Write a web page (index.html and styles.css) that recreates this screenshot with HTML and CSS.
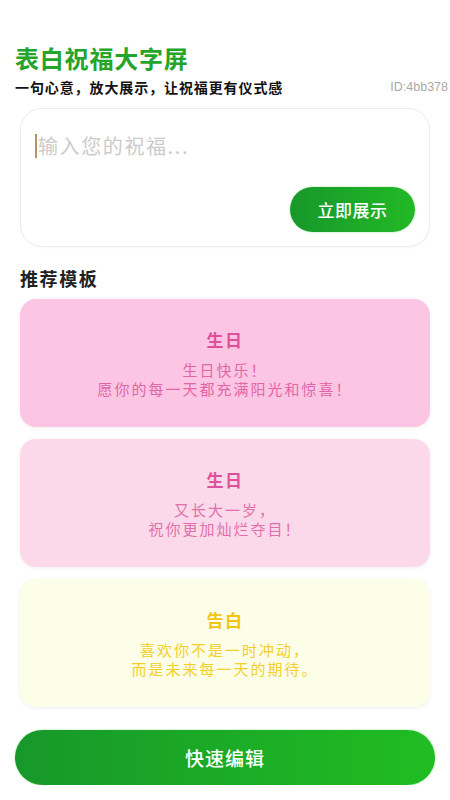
FILE: index.html
```html
<!DOCTYPE html>
<html lang="zh-CN">
<head>
<meta charset="utf-8">
<title>表白祝福大字屏</title>
<link rel="stylesheet" href="styles.css">
</head>
<body>
<div class="page">
  <header class="header">
    <h1 class="title">表白祝福大字屏</h1>
    <div class="sub-row">
      <span class="subtitle">一句心意，放大展示，让祝福更有仪式感</span>
      <span class="id">ID:4bb378</span>
    </div>
  </header>

  <section class="input-card">
    <div class="input-line">
      <span class="caret"></span>
      <span class="placeholder">输入您的祝福...</span>
    </div>
    <div class="input-actions">
      <button class="show-btn">立即展示</button>
    </div>
  </section>

  <h2 class="section-title">推荐模板</h2>

  <div class="templates">
    <div class="tpl tpl-pink">
      <div class="tpl-title">生日</div>
      <div class="tpl-text">生日快乐！<br>愿你的每一天都充满阳光和惊喜！</div>
    </div>
    <div class="tpl tpl-light">
      <div class="tpl-title">生日</div>
      <div class="tpl-text">又长大一岁，<br>祝你更加灿烂夺目！</div>
    </div>
    <div class="tpl tpl-yellow">
      <div class="tpl-title">告白</div>
      <div class="tpl-text">喜欢你不是一时冲动，<br>而是未来每一天的期待。</div>
    </div>
  </div>

  <button class="edit-btn">快速编辑</button>
</div>
</body>
</html>
```

FILE: styles.css
```css
* { box-sizing: border-box; }
html, body { margin: 0; padding: 0; background: #ffffff; }
body {
  font-family: "Noto Sans CJK SC", "Noto Sans", "Liberation Sans", sans-serif;
  color: #111;
}
.page {
  width: 450px;
  padding-top: 43px;
  display: flex;
  flex-direction: column;
}
.header { padding: 0 2px 0 15px; }
.title {
  margin: 0;
  font-size: 24px;
  line-height: 29px;
  font-weight: 700;
  letter-spacing: 0.8px;
  color: #25a42a;
}
.sub-row {
  margin-top: 5px;
  height: 20px;
  display: flex;
  align-items: center;
  justify-content: space-between;
}
.subtitle {
  font-size: 14px;
  line-height: 20px;
  font-weight: 700;
  letter-spacing: 0.9px;
  color: #111;
}
.id {
  font-family: "Liberation Sans", Arial, sans-serif;
  font-size: 12.5px;
  color: #a9a9a9;
}
.input-card {
  margin: 11px 20px 0 20px;
  height: 139px;
  border: 1px solid #ececec;
  border-radius: 22px;
  background: #fff;
  padding: 23px 14px 14px 14px;
  display: flex;
  flex-direction: column;
  justify-content: space-between;
  box-shadow: 0 1px 3px rgba(0,0,0,0.03);
}
.input-line {
  display: flex;
  align-items: center;
  height: 28px;
}
.caret {
  width: 2px;
  height: 24px;
  background: #b99463;
  margin-right: 1px;
}
.placeholder {
  font-size: 20px;
  line-height: 28px;
  letter-spacing: 1.6px;
  color: #cbcbcb;
}
.input-actions {
  display: flex;
  justify-content: flex-end;
}
.show-btn {
  width: 125px;
  height: 45px;
  border: none;
  border-radius: 23px;
  background: linear-gradient(90deg, #17982a, #22b926);
  color: #fff;
  font-family: inherit;
  font-size: 17px;
  font-weight: 500;
  letter-spacing: 0.5px;
  box-shadow: 0 0 2px rgba(60,200,60,0.5);
}
.section-title {
  margin: 19px 0 0 20px;
  font-size: 18px;
  line-height: 24px;
  font-weight: 700;
  letter-spacing: 1.6px;
  color: #222;
}
.templates {
  margin: 9px 20px 0 20px;
  display: flex;
  flex-direction: column;
  gap: 12px;
}
.tpl {
  height: 128px;
  border-radius: 16px;
  display: flex;
  flex-direction: column;
  align-items: center;
  justify-content: center;
  text-align: center;
  box-shadow: 0 1px 4px rgba(0,0,0,0.07);
}
.tpl-title {
  font-size: 17px;
  line-height: 24px;
  font-weight: 700;
  letter-spacing: 1.5px;
}
.tpl-text {
  margin-top: 8px;
  font-size: 15px;
  line-height: 19px;
  letter-spacing: 2px;
}
.tpl-pink { background: #fdc5e4; }
.tpl-pink .tpl-title { color: #e0509a; }
.tpl-pink .tpl-text { color: #e166a6; }
.tpl-light { background: #fbd9ea; }
.tpl-light .tpl-title { color: #e0509a; }
.tpl-light .tpl-text { color: #e170aa; }
.tpl-yellow { background: #fdfee7; }
.tpl-yellow .tpl-title { color: #f0c511; }
.tpl-yellow .tpl-text { color: #f3cf2a; }
.edit-btn {
  margin: 23px 15px 0 15px;
  height: 55px;
  border: none;
  border-radius: 28px;
  background: linear-gradient(90deg, #17982a, #20bd22);
  color: #fff;
  font-family: inherit;
  font-size: 19px;
  font-weight: 500;
  letter-spacing: 1px;
  box-shadow: 0 0 2px rgba(60,200,60,0.6);
}
```
